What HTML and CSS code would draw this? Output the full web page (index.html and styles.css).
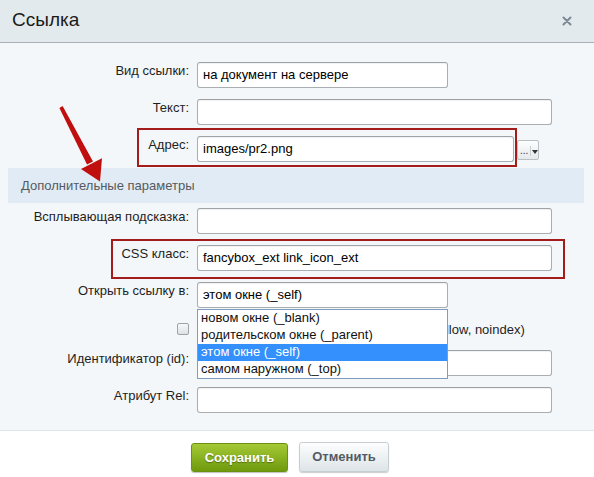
FILE: index.html
```html
<!DOCTYPE html>
<html lang="ru">
<head>
<meta charset="utf-8">
<title>Ссылка</title>
<link rel="stylesheet" href="styles.css">
</head>
<body>
<div class="dialog">
  <div class="dialog-head">
    <span class="dialog-title">Ссылка</span>
    <svg class="dialog-close" width="10" height="10" viewBox="0 0 10 10"><path d="M1.5 1.5 L8.5 8.5 M8.5 1.5 L1.5 8.5" stroke="#7d8a95" stroke-width="2" stroke-linecap="round"/></svg>
  </div>

  <div class="dialog-body">
    <div class="row">
      <label class="lbl">Вид ссылки:</label>
      <div class="field short">на документ на сервере</div>
    </div>
    <div class="row">
      <label class="lbl">Текст:</label>
      <div class="field"></div>
    </div>
    <div class="row">
      <label class="lbl">Адрес:</label>
      <div class="cell-inline">
        <div class="field addr">images/pr2.png</div>
        <span class="browse-btn"><span class="dots">...</span><span class="tri"></span></span>
      </div>
      <span class="mark mark-addr"></span>
    </div>

    <div class="band">Дополнительные параметры</div>

    <div class="row">
      <label class="lbl">Всплывающая подсказка:</label>
      <div class="field"></div>
    </div>
    <div class="row">
      <label class="lbl">CSS класс:</label>
      <div class="field">fancybox_ext link_icon_ext</div>
      <span class="mark mark-css"></span>
    </div>
    <div class="row">
      <label class="lbl">Открыть ссылку в:</label>
      <div class="select-wrap">
        <div class="field short">этом окне (_self)</div>
        <ul class="options">
          <li>новом окне (_blank)</li>
          <li>родительском окне (_parent)</li>
          <li class="on">этом окне (_self)</li>
          <li>самом наружном (_top)</li>
        </ul>
      </div>
    </div>
    <div class="row row-check">
      <span class="check-cell"><span class="checkbox"></span></span>
      <span class="check-text">Запретить индексацию этой ссылки (nofollow, noindex)</span>
    </div>
    <div class="row">
      <label class="lbl">Идентификатор (id):</label>
      <div class="field"></div>
    </div>
    <div class="row">
      <label class="lbl">Атрибут Rel:</label>
      <div class="field"></div>
    </div>
  </div>

  <div class="dialog-foot">
    <span class="btn btn-save">Сохранить</span>
    <span class="btn btn-cancel">Отменить</span>
  </div>

  <svg class="pointer" width="594" height="200" viewBox="0 0 594 200">
    <polygon points="62.6,106.1 59.4,107.9 87.0,164.6 93.0,161.4" fill="#c00f0f"/>
    <polygon points="102,158.2 81,169 100,181.5" fill="#c00f0f"/>
  </svg>
</div>
</body>
</html>
```

FILE: styles.css
```css
html, body {
  margin: 0;
  padding: 0;
  background: #ffffff;
}

body {
  font-family: "Liberation Sans", Arial, sans-serif;
  font-size: 13px;
  color: #1e1e1e;
}

.dialog {
  position: relative;
  width: 594px;
  height: 477px;
  overflow: hidden;
}

/* title bar */
.dialog-head {
  height: 42px;
  background: #e3eaee;
  border-bottom: 1px solid #a8afb3;
  display: flex;
  align-items: center;
  justify-content: space-between;
  padding: 0 22px 0 12px;
}

.dialog-title {
  font-size: 19px;
  color: #1a1a1a;
  margin-top: -2px;
}

.dialog-close {
  display: block;
}

/* form area */
.dialog-body {
  background: #f4f7f9;
  padding: 19px 0 17px;
  border-bottom: 1px solid #dfe5e8;
}

.row {
  position: relative;
  display: grid;
  grid-template-columns: 189px auto;
  column-gap: 8px;
  align-items: start;
}

.row + .row {
  margin-top: 11px;
}

.lbl {
  text-align: right;
  line-height: 16px;
  padding-top: 1px;
  white-space: nowrap;
}

.field {
  box-sizing: border-box;
  width: 355px;
  height: 26px;
  background: #fff;
  border: 1px solid #a9aeb2;
  border-top-color: #9da2a6;
  border-radius: 3px;
  box-shadow: inset 0 1px 1px rgba(0, 0, 0, 0.06);
  padding: 0 5px;
  line-height: 24px;
  color: #000;
  white-space: nowrap;
}

.field.short {
  width: 251px;
}

.field.addr {
  width: 317px;
}

.cell-inline {
  display: flex;
  align-items: flex-start;
}

/* "..." picker button */
.browse-btn {
  box-sizing: border-box;
  margin: 4px 0 0 3px;
  width: 22px;
  height: 20px;
  border: 1px solid #b9bfc3;
  border-radius: 2px;
  background: linear-gradient(#fdfefe, #e4e9ec);
  display: flex;
  align-items: flex-end;
  padding: 0 0 3px 2px;
  font-size: 10px;
  line-height: 10px;
  color: #333;
}

.browse-btn .dots {
  width: 11px;
  border-right: 1px solid #c9ced1;
  height: 10px;
}

.browse-btn .tri {
  width: 0;
  height: 0;
  margin: 0 0 2px 1px;
  border-left: 3px solid transparent;
  border-right: 3px solid transparent;
  border-top: 4px solid #333;
}

/* red annotation frames */
.mark {
  position: absolute;
  box-sizing: border-box;
  border: 2px solid #a31b1b;
  pointer-events: none;
}

.mark-addr {
  left: 137px;
  top: -8px;
  width: 380px;
  height: 39px;
}

.mark-css {
  left: 111px;
  top: -6px;
  width: 454px;
  height: 40px;
}

/* section divider */
.band {
  margin: 6px 10px 5px 8px;
  height: 35px;
  background: #e1ebf5;
  color: #555a5e;
  line-height: 35px;
  padding-left: 13px;
}

/* open-in select with its list shown */
.select-wrap {
  position: relative;
  width: 251px;
}

.options {
  position: absolute;
  z-index: 3;
  left: 0;
  top: 27px;
  box-sizing: border-box;
  width: 251px;
  margin: 0;
  padding: 0;
  list-style: none;
  background: #fff;
  border: 1px solid #7f9cbf;
}

.options li {
  height: 17px;
  line-height: 16px;
  padding-left: 3px;
  color: #111;
  white-space: nowrap;
}

.options li.on {
  background: #3390fd;
  color: #fff;
}

/* checkbox line */
.row-check {
  height: 20px;
  align-items: center;
}

.check-cell {
  display: flex;
  justify-content: flex-end;
}

.checkbox {
  box-sizing: border-box;
  width: 12px;
  height: 12px;
  border: 1px solid #9ea3a7;
  border-radius: 2px;
  background: linear-gradient(#f6f7f8, #dfe2e4);
}

.check-text {
  white-space: nowrap;
  color: #1e1e1e;
}

/* footer buttons */
.dialog-foot {
  display: flex;
  justify-content: center;
  align-items: center;
  gap: 11px;
  padding: 11px 14px 0 0;
}

.btn {
  box-sizing: border-box;
  height: 30px;
  border-radius: 3px;
  font-weight: bold;
  font-size: 13px;
  line-height: 28px;
  text-align: center;
}

.btn-save {
  width: 97px;
  height: 29px;
  color: #fff;
  background: linear-gradient(#a5c936, #6e9a0c);
  border: 1px solid #6a910f;
  text-shadow: 0 1px 1px rgba(0, 0, 0, 0.35);
  box-shadow: 0 1px 1px rgba(0, 0, 0, 0.25);
  margin-top: 1px;
}

.btn-cancel {
  width: 90px;
  color: #535c64;
  background: linear-gradient(#fdfefe, #dde4e7);
  border: 1px solid #c7ced2;
  box-shadow: 0 1px 1px rgba(0, 0, 0, 0.2);
}

/* red pointing arrow drawn on top of the form */
.pointer {
  position: absolute;
  left: 0;
  top: 0;
  pointer-events: none;
  z-index: 5;
}
```
